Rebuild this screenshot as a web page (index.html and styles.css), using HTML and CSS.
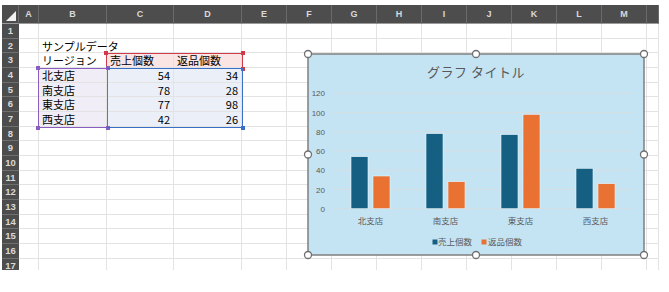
FILE: index.html
```html
<!DOCTYPE html>
<html lang="ja">
    <head>
        <meta charset="utf-8">
        <link rel="stylesheet" href="styles.css">
    </head>
    <body>
        <div class="sheet">
            <b class="corner"></b><b class="col">A</b><b class="col">B</b><b class="col">C</b><b class="col">D</b><b class="col">E</b><b class="col">F</b><b class="col">G</b><b class="col">H</b><b class="col">I</b><b class="col">J</b><b class="col">K</b><b class="col">L</b><b class="col">M</b><b class="col"></b>
            <b>1</b><i></i><i></i><i></i><i></i><i></i><i></i><i></i><i></i><i></i><i></i><i></i><i></i><i></i><i></i>
            <b>2</b><i></i><i>サンプルデータ</i><i></i><i></i><i></i><i></i><i></i><i></i><i></i><i></i><i></i><i></i><i></i><i></i>
            <b>3</b><i></i><i>リージョン</i><i class="hd">売上個数</i><i class="hd">返品個数</i><i></i><i></i><i></i><i></i><i></i><i></i><i></i><i></i><i></i><i></i>
            <b>4</b><i></i><i class="rg">北支店</i><i class="v">54</i><i class="v">34</i><i></i><i></i><i></i><i></i><i></i><i></i><i></i><i></i><i></i><i></i>
            <b>5</b><i></i><i class="rg">南支店</i><i class="v">78</i><i class="v">28</i><i></i><i></i><i></i><i></i><i></i><i></i><i></i><i></i><i></i><i></i>
            <b>6</b><i></i><i class="rg">東支店</i><i class="v">77</i><i class="v">98</i><i></i><i></i><i></i><i></i><i></i><i></i><i></i><i></i><i></i><i></i>
            <b>7</b><i></i><i class="rg">西支店</i><i class="v">42</i><i class="v">26</i><i></i><i></i><i></i><i></i><i></i><i></i><i></i><i></i><i></i><i></i>
            <b>8</b><i></i><i></i><i></i><i></i><i></i><i></i><i></i><i></i><i></i><i></i><i></i><i></i><i></i><i></i>
            <b>9</b><i></i><i></i><i></i><i></i><i></i><i></i><i></i><i></i><i></i><i></i><i></i><i></i><i></i><i></i>
            <b>10</b><i></i><i></i><i></i><i></i><i></i><i></i><i></i><i></i><i></i><i></i><i></i><i></i><i></i><i></i>
            <b>11</b><i></i><i></i><i></i><i></i><i></i><i></i><i></i><i></i><i></i><i></i><i></i><i></i><i></i><i></i>
            <b>12</b><i></i><i></i><i></i><i></i><i></i><i></i><i></i><i></i><i></i><i></i><i></i><i></i><i></i><i></i>
            <b>13</b><i></i><i></i><i></i><i></i><i></i><i></i><i></i><i></i><i></i><i></i><i></i><i></i><i></i><i></i>
            <b>14</b><i></i><i></i><i></i><i></i><i></i><i></i><i></i><i></i><i></i><i></i><i></i><i></i><i></i><i></i>
            <b>15</b><i></i><i></i><i></i><i></i><i></i><i></i><i></i><i></i><i></i><i></i><i></i><i></i><i></i><i></i>
            <b>16</b><i></i><i></i><i></i><i></i><i></i><i></i><i></i><i></i><i></i><i></i><i></i><i></i><i></i><i></i>
            <b>17</b><i></i><i></i><i></i><i></i><i></i><i></i><i></i><i></i><i></i><i></i><i></i><i></i><i></i><i></i>

            <!-- 参照範囲 -->
            <div class="range red"><s class="tl"></s><s class="tr"></s><s class="br"></s></div>
            <div class="range purple"><s class="tl"></s><s class="tr"></s><s class="bl"></s><s class="br"></s></div>
            <div class="range blue"><s class="br"></s></div>

            <svg class="chart" width="346" height="211" viewBox="0 0 346 211">
                <rect x="5" y="5" width="336" height="201" fill="#c4e4f4" stroke="#7f7f7f" stroke-width="1.5"/>
                <text class="title" x="173" y="28">グラフ タイトル</text>
                <g stroke="#d6dde2" stroke-width="1">
                    <line x1="30" x2="330" y1="44.2" y2="44.2"/>
                    <line x1="30" x2="330" y1="63.45" y2="63.45"/>
                    <line x1="30" x2="330" y1="82.7" y2="82.7"/>
                    <line x1="30" x2="330" y1="101.95" y2="101.95"/>
                    <line x1="30" x2="330" y1="121.2" y2="121.2"/>
                    <line x1="30" x2="330" y1="140.45" y2="140.45"/>
                    <line x1="30" x2="330" y1="159.7" y2="159.7"/>
                </g>
                <g class="axis">
                    <text x="22" y="47">120</text>
                    <text x="22" y="66.5">100</text>
                    <text x="22" y="85.7">80</text>
                    <text x="22" y="105">60</text>
                    <text x="22" y="124.2">40</text>
                    <text x="22" y="143.5">20</text>
                    <text x="22" y="162.7">0</text>
                </g>
                <g class="bar sales">
                    <rect x="48" y="107.7" width="17" height="52"/>
                    <rect x="123" y="84.6" width="17" height="75.1"/>
                    <rect x="198" y="85.6" width="17" height="74.1"/>
                    <rect x="273" y="119.3" width="17" height="40.4"/>
                </g>
                <g class="bar returns">
                    <rect x="70" y="127" width="17" height="32.7"/>
                    <rect x="145" y="132.7" width="17" height="27"/>
                    <rect x="220" y="65.4" width="17" height="94.3"/>
                    <rect x="295" y="134.7" width="17" height="25"/>
                </g>
                <g class="cat">
                    <text x="67.5" y="174.5">北支店</text>
                    <text x="142.5" y="174.5">南支店</text>
                    <text x="217.5" y="174.5">東支店</text>
                    <text x="292.5" y="174.5">西支店</text>
                </g>
                <rect x="129.5" y="190.5" width="5" height="5" fill="#156082"/>
                <text class="legend" x="135" y="196">売上個数</text>
                <rect x="178.5" y="190.5" width="5" height="5" fill="#e97132"/>
                <text class="legend" x="185" y="196">返品個数</text>
                <g class="handle">
                    <circle cx="5" cy="5" r="3.5"/>
                    <circle cx="173" cy="5" r="3.5"/>
                    <circle cx="341" cy="5" r="3.5"/>
                    <circle cx="5" cy="105.5" r="3.5"/>
                    <circle cx="341" cy="105.5" r="3.5"/>
                    <circle cx="5" cy="206" r="3.5"/>
                    <circle cx="173" cy="206" r="3.5"/>
                    <circle cx="341" cy="206" r="3.5"/>
                </g>
            </svg>
        </div>
    </body>
</html>
```

FILE: styles.css
```css
*{margin:0;padding:0;box-sizing:border-box;}
body{background:#fff;padding:5px 0 0 2px;font-family:"Noto Sans CJK JP","Liberation Sans",sans-serif;}

.sheet{position:relative;width:657px;height:265px;overflow:hidden;
    display:grid;
    grid-template-columns:17px 20px 68px 67px 68px repeat(9,45px) 12px;
    grid-template-rows:19px repeat(17,14.67px);
}
.sheet b{background:#4d4d4d;color:#d9d9d9;font:700 9.5px/14px "Liberation Sans",sans-serif;
    text-align:center;border-bottom:1px solid #6f6f6f;
}
.sheet b.col{font-size:9px;line-height:19px;border-right:1px solid #6a6a6a;border-bottom:1px solid #9a9a9a;}
.sheet b.corner{position:relative;border-right:1px solid #6a6a6a;border-bottom:1px solid #9a9a9a;}
.sheet b.corner::after{content:"";position:absolute;right:2px;bottom:2px;
    border-left:10px solid transparent;border-bottom:10px solid #f2f2f2;}

.sheet i{font-style:normal;font-size:11px;line-height:14px;color:#000;padding:0 3px;
    white-space:nowrap;border-right:1px solid #e3e3e3;border-bottom:1px solid #e3e3e3;}
.sheet i.hd{background:#fbe4e4;}
.sheet i.rg{background:#f1edf7;}
.sheet i.v{background:#eaeff8;text-align:right;}

.range{position:absolute;border:1.5px solid;pointer-events:none;}
.range.red{left:104px;top:47.5px;width:137px;height:16.5px;border-color:#d13a48;}
.range.purple{left:36px;top:62.5px;width:70px;height:60px;border-color:#8a5ec0;}
.range.blue{left:104.5px;top:62.5px;width:136.5px;height:60px;border-color:#3a6fc6;border-left:none;}
.range s{position:absolute;width:4px;height:4px;background:currentColor;}
.range.red{color:#d13a48;}
.range.purple{color:#8a5ec0;}
.range.blue{color:#3a6fc6;}
.range .tl{left:-3px;top:-3px;}
.range .tr{right:-3px;top:-3px;}
.range .bl{left:-3px;bottom:-3px;}
.range .br{right:-3px;bottom:-3px;}

.chart{position:absolute;left:301px;top:44px;font-family:"Noto Sans CJK JP",sans-serif;}
.chart .title{font-size:13px;fill:#595959;text-anchor:middle;letter-spacing:0.5px;}
.chart .axis text{font-size:8px;fill:#595959;text-anchor:end;font-family:"Liberation Sans",sans-serif;}
.chart .bar rect{stroke:#e6f3fa;stroke-width:0.6;}
.chart .sales{fill:#156082;}
.chart .returns{fill:#e97132;}
.chart .cat text{font-size:8.5px;fill:#595959;text-anchor:middle;}
.chart .legend{font-size:8.5px;fill:#595959;}
.chart .handle circle{fill:#fff;stroke:#6f6f6f;stroke-width:1.3;}
```
